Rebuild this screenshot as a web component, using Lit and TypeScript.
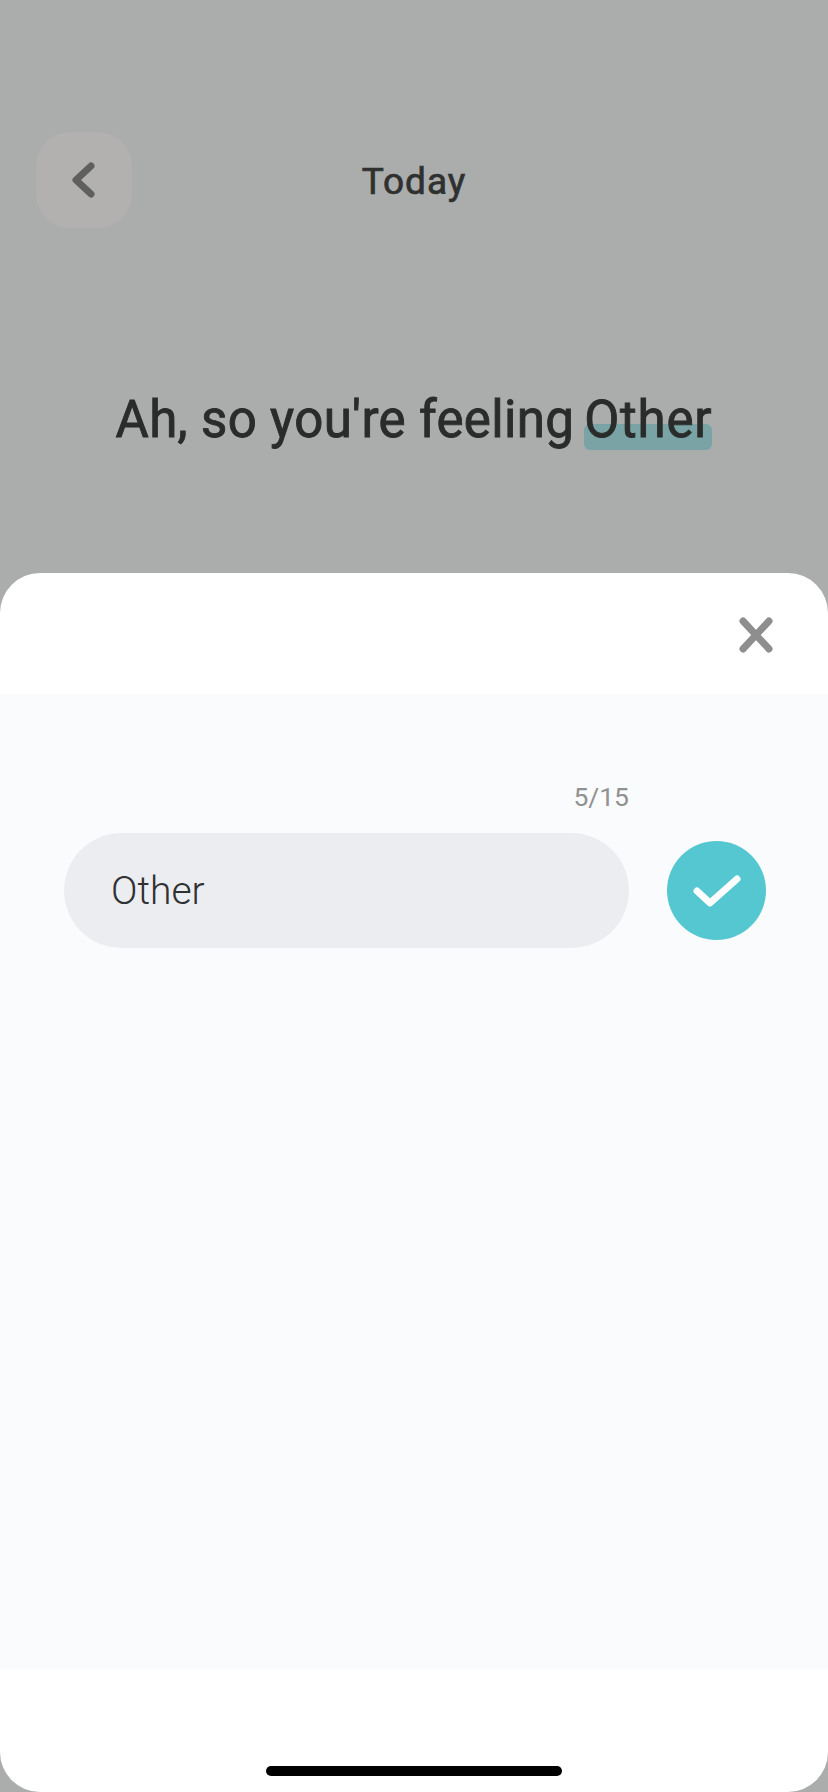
import {LitElement, html, css} from 'lit';
import {customElement} from 'lit/decorators.js';

@customElement('app-root')
export class AppRoot extends LitElement {

    static styles = css`
      :host {
        display: block;
        width: 828px;
        height: 1792px;
        background: #abadac;
        font-family: "Roboto", "Inter", sans-serif;
        overflow: hidden;
      }

      .page {
        height: 100%;
        display: flex;
        flex-direction: column;
      }

      .top {
        height: 573px;
        padding: 132px 36px 0;
        box-sizing: border-box;
      }

      .nav {
        display: grid;
        grid-template-columns: 96px 1fr 96px;
        align-items: center;
      }

      .back {
        width: 96px;
        height: 96px;
        border-radius: 34px;
        background: #b2b1af;
        display: flex;
        align-items: center;
        justify-content: center;
      }

      .nav-title {
        padding-top: 2px;
        text-align: center;
        font-size: 37px;
        font-weight: 400;
        letter-spacing: 1px;
        -webkit-text-stroke: 0.7px #2f3130;
        color: #2f3130;
      }

      .heading {
        margin: 162px 0 0;
        text-align: center;
        font-size: 51px;
        font-weight: 400;
        letter-spacing: 0.35px;
        -webkit-text-stroke: 0.9px #2a2c2b;
        line-height: 60px;
        color: #2a2c2b;
        white-space: nowrap;
      }

      .word {
        position: relative;
        display: inline-block;
        margin-left: -3px;
        letter-spacing: 0.8px;
      }

      .word span {
        position: relative;
      }

      .word::before {
        content: "";
        position: absolute;
        left: 0;
        right: 0;
        top: 34px;
        height: 26px;
        border-radius: 6px;
        background: #79a3a5;
      }

      .sheet {
        flex: 1;
        display: flex;
        flex-direction: column;
        background: #fff;
        border-radius: 40px;
      }

      .sheet-head {
        height: 121px;
        padding: 44px 54px 0 0;
        box-sizing: border-box;
        display: flex;
        justify-content: flex-end;
        align-items: flex-start;
      }

      .sheet-body {
        height: 975px;
        background: #fafbfd;
        padding: 88px 62px 0 64px;
        box-sizing: border-box;
      }

      .count {
        width: 565px;
        text-align: right;
        font-size: 26.5px;
        line-height: 30px;
        color: #8f9192;
      }

      .row {
        margin-top: 21px;
        display: flex;
        align-items: center;
        gap: 38px;
      }

      .field {
        width: 565px;
        height: 115px;
        border-radius: 58px;
        background: #ecedf0;
        padding-left: 47px;
        box-sizing: border-box;
        display: flex;
        align-items: center;
        font-size: 39px;
        font-weight: 300;
        color: #2f3133;
      }

      .ok {
        width: 99px;
        height: 99px;
        border-radius: 50%;
        background: #55c7d1;
        display: flex;
        align-items: center;
        justify-content: center;
      }

      .foot {
        flex: 1;
        display: flex;
        justify-content: center;
        align-items: flex-end;
        padding-bottom: 16px;
      }

      .home-bar {
        width: 296px;
        height: 10px;
        border-radius: 5px;
        background: #000;
      }

      svg {
        display: block;
        fill: none;
        stroke-linecap: round;
        stroke-linejoin: round;
      }
    `

    render() {
        return html`
            <div class="page">
                <div class="top">
                    <div class="nav">
                        <div class="back">
                            <svg width="24" height="36" viewBox="0 0 24 36" stroke="#5f5f5e" stroke-width="7">
                                <path d="M19 4 L4 18 L19 32"/>
                            </svg>
                        </div>
                        <div class="nav-title">Today</div>
                    </div>
                    <h1 class="heading">Ah, so you're feeling <span class="word"><span>Other</span></span></h1>
                </div>
                <div class="sheet">
                    <div class="sheet-head">
                        <svg width="36" height="36" viewBox="0 0 36 36" stroke="#8e8e8e" stroke-width="7">
                            <path d="M5 4 L31 32 M31 4 L5 32"/>
                        </svg>
                    </div>
                    <div class="sheet-body">
                        <div class="count">5/15</div>
                        <div class="row">
                            <div class="field">Other</div>
                            <div class="ok">
                                <svg width="48" height="34" viewBox="0 0 48 34" stroke="#fff" stroke-width="7">
                                    <path d="M4 17 L17 29 L44 5"/>
                                </svg>
                            </div>
                        </div>
                    </div>
                    <div class="foot"><div class="home-bar"></div></div>
                </div>
            </div>
        `
    }
}
